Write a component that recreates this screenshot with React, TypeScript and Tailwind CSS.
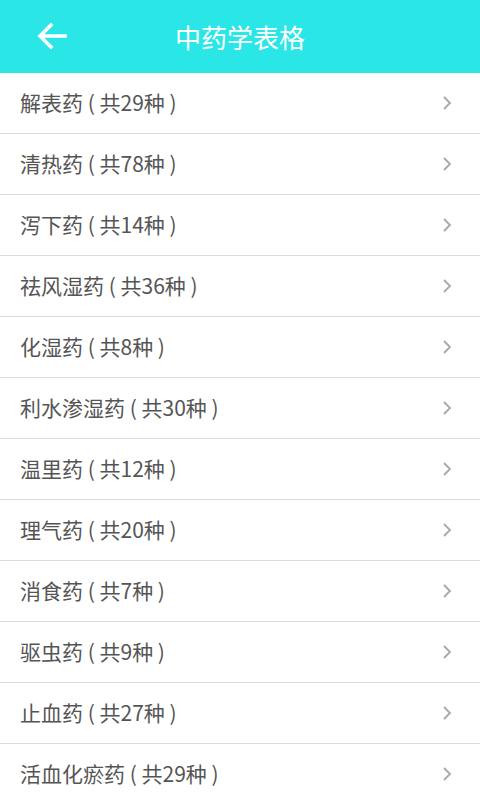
const items = [
  '解表药 ( 共29种 )',
  '清热药 ( 共78种 )',
  '泻下药 ( 共14种 )',
  '祛风湿药 ( 共36种 )',
  '化湿药 ( 共8种 )',
  '利水渗湿药 ( 共30种 )',
  '温里药 ( 共12种 )',
  '理气药 ( 共20种 )',
  '消食药 ( 共7种 )',
  '驱虫药 ( 共9种 )',
  '止血药 ( 共27种 )',
  '活血化瘀药 ( 共29种 )',
]

export default function App() {
  return (
    <div
      className="w-[480px] h-[800px] overflow-hidden bg-white"
      style={{ fontFamily: '"Noto Sans CJK SC", "Noto Sans", sans-serif' }}
    >
      <div className="h-[73px] bg-[#2ae6e6] flex items-center relative">
        <svg className="absolute left-[36px] top-[22px]" width="32" height="28" viewBox="0 0 32 28" fill="none">
          <path d="M29 14H5M15 3L4 14l11 11" stroke="white" strokeWidth="3.6" strokeLinecap="square" />
        </svg>
        <h1 className="w-full text-center text-white text-[26px] leading-none">中药学表格</h1>
      </div>
      <ul>
        {items.map((t) => (
          <li key={t} className="h-[61px] border-b border-[#dcdcdc] flex items-center justify-between pl-[20px] pr-[28px]">
            <span className="text-[21px] text-[#555555]">{t}</span>
            <svg width="10" height="16" viewBox="0 0 10 16" fill="none">
              <path d="M2 2l6 6-6 6" stroke="#a8a8a8" strokeWidth="1.8" />
            </svg>
          </li>
        ))}
      </ul>
    </div>
  )
}
